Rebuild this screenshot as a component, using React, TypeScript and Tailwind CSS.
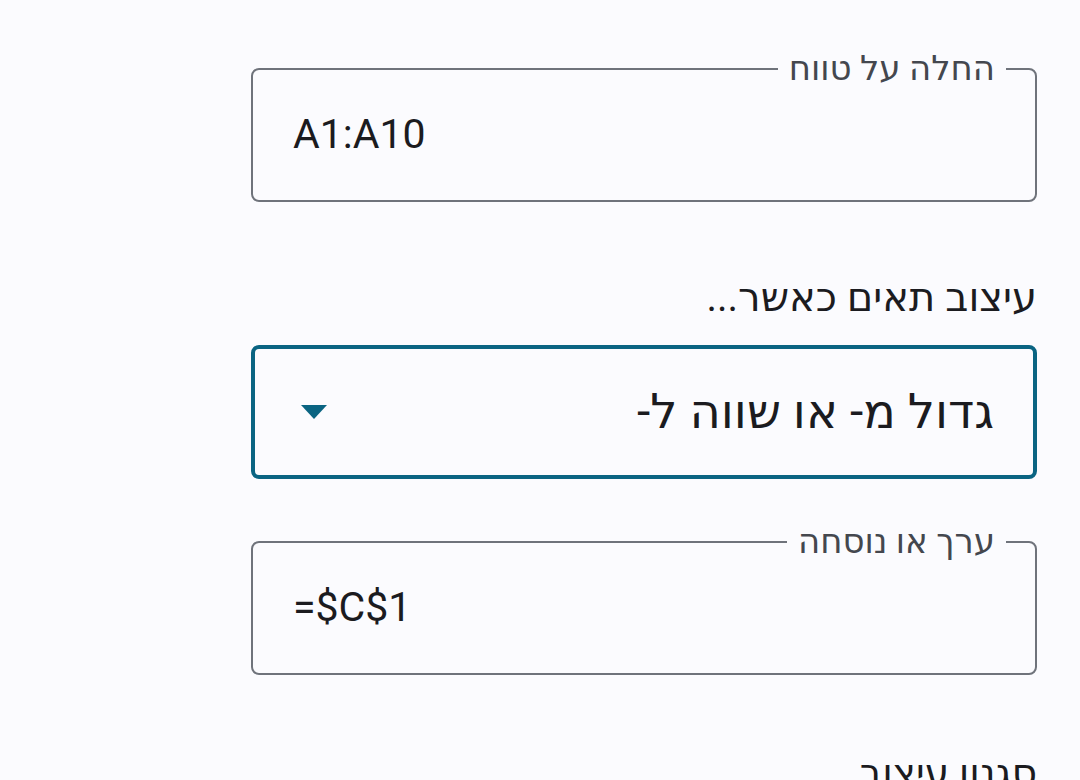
import React from 'react'

const font = { fontFamily: 'Roboto, "DejaVu Sans", "Noto Sans", sans-serif' }

function OutlinedField({ label, value }: { label: string; value: string }) {
  return (
    <div className="relative h-[134px] rounded-lg border-2 border-[#6f737b]">
      <span className="absolute -top-[22px] right-[29px] bg-[#fbfbfe] px-[11px] text-[34px] leading-[40px] text-[#44474e]">
        {label}
      </span>
      <div dir="ltr" className="flex h-full items-center pl-[40px] text-[41px] text-[#1b1b1f]">
        {value}
      </div>
    </div>
  )
}

export default function App() {
  return (
    <div dir="rtl" style={font} className="h-[780px] w-[1080px] overflow-hidden bg-[#fbfbfe]">
      <div className="mr-[43px] w-[786px] pt-[68px]">
        <OutlinedField label="החלה על טווח" value="A1:A10" />

        <div className="mt-[73px] text-[40px] leading-[46px] text-[#1b1b1f]">עיצוב תאים כאשר...</div>

        <div className="mt-[24px] flex h-[134px] items-center justify-between rounded-lg border-4 border-[#0a6482] pl-[46px] pr-[39px]">
          <span className="text-[48px] leading-[54px] text-[#1b1b1f]">גדול מ- או שווה ל-</span>
          <svg width="26" height="14" viewBox="0 0 26 14">
            <path d="M0 0h26L13 14z" fill="#0a6482" />
          </svg>
        </div>

        <div className="mt-[62px]">
          <OutlinedField label="ערך או נוסחה" value="=$C$1" />
        </div>

        <div className="mt-[75px] text-[39px] leading-[46px] text-[#1b1b1f]">סגנון עיצוב</div>
      </div>
    </div>
  )
}
